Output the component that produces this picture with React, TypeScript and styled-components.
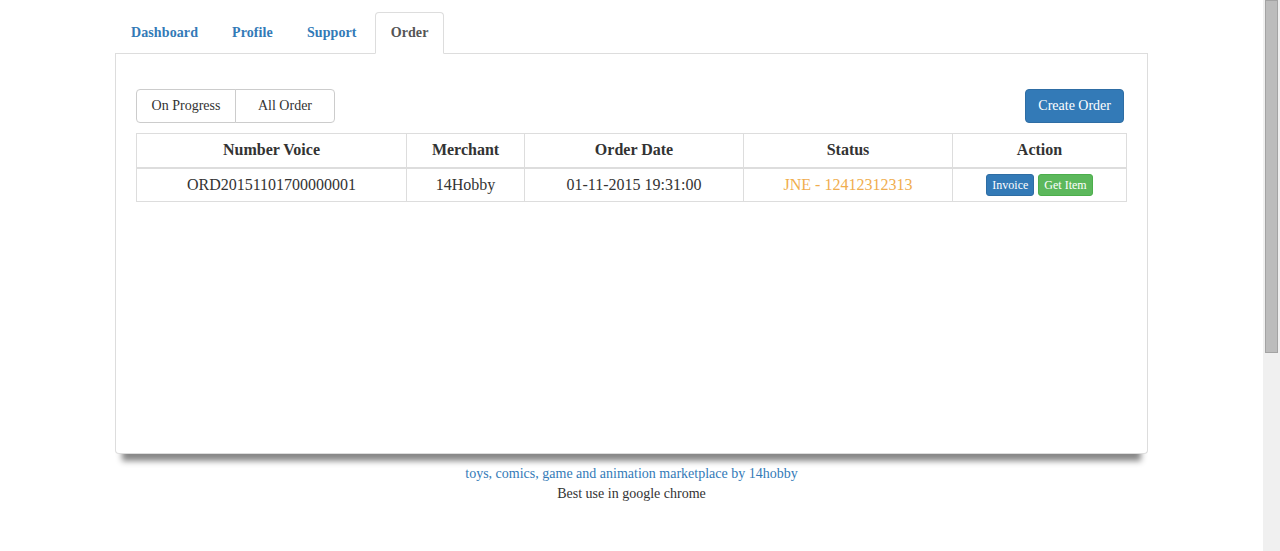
import React from "react";
import styled, { createGlobalStyle } from "styled-components";

const GlobalStyle = createGlobalStyle`
  html, body {
    margin: 0;
    padding: 0;
    background: #ffffff;
    font-family: "Liberation Serif", "Times New Roman", serif;
    font-size: 14px;
    line-height: 1.42857143;
    color: #333333;
  }
  * { box-sizing: border-box; }
`;

const Page = styled.div`
  margin-right: 17px;
  padding-top: 12px;
`;

const Container = styled.div`
  width: 1033px;
  margin: 0 auto;
`;

const Tabs = styled.ul`
  display: flex;
  list-style: none;
  margin: 0;
  padding: 0;
  border-bottom: 1px solid #dddddd;
`;

const TabItem = styled.li`
  margin-right: 2px;
  margin-bottom: -1px;
`;

const TabLink = styled.a<{ $active?: boolean }>`
  display: block;
  padding: 10px 15px;
  font-weight: bold;
  font-size: 14px;
  line-height: 20px;
  letter-spacing: 0.1px;
  text-decoration: none;
  cursor: pointer;
  border: 1px solid ${(p) => (p.$active ? "#dddddd" : "transparent")};
  border-bottom-color: transparent;
  border-radius: 4px 4px 0 0;
  background: ${(p) => (p.$active ? "#ffffff" : "transparent")};
  color: ${(p) => (p.$active ? "#555555" : "#337ab7")};
`;

const Panel = styled.div`
  height: 400px;
  border: 1px solid #dddddd;
  border-top: none;
  border-radius: 0 0 4px 4px;
  padding: 35px 20px 20px;
  background: #ffffff;
  box-shadow: 0 14px 6px -7px #888888;
`;

const Toolbar = styled.div`
  display: flex;
  justify-content: space-between;
  align-items: flex-start;
  margin-bottom: 10px;
`;

const BtnGroup = styled.div`
  display: flex;
`;

const GroupButton = styled.button<{ $first?: boolean }>`
  width: 100px;
  height: 34px;
  padding: 6px 12px;
  font-family: inherit;
  font-size: 14px;
  line-height: 20px;
  color: #333333;
  background: #ffffff;
  border: 1px solid #cccccc;
  margin-left: ${(p) => (p.$first ? "0" : "-1px")};
  border-radius: ${(p) => (p.$first ? "4px 0 0 4px" : "0 4px 4px 0")};
  cursor: pointer;
`;

const PrimaryButton = styled.button`
  height: 34px;
  padding: 6px 12px;
  margin-right: 3px;
  font-family: inherit;
  font-size: 14px;
  line-height: 20px;
  color: #ffffff;
  background: #337ab7;
  border: 1px solid #2e6da4;
  border-radius: 4px;
  cursor: pointer;
`;

const Table = styled.table`
  width: 100%;
  border-collapse: collapse;
  border-spacing: 0;
  font-size: 16px;
  line-height: 22px;
  table-layout: fixed;
`;

const Th = styled.th<{ $w?: number }>`
  width: ${(p) => (p.$w ? `${p.$w}px` : "auto")};
  padding: 5px;
  height: 34px;
  text-align: center;
  font-weight: bold;
  border: 1px solid #dddddd;
  border-bottom: 2px solid #dddddd;
  color: #333333;
`;

const Td = styled.td<{ $status?: boolean }>`
  padding: 5px;
  height: 34px;
  text-align: center;
  border: 1px solid #dddddd;
  color: ${(p) => (p.$status ? "#f0ad4e" : "#333333")};
`;

const Actions = styled.div`
  display: flex;
  justify-content: center;
  gap: 4px;
`;

const SmallButton = styled.button<{ $variant: "primary" | "success" }>`
  padding: 1px 5px;
  font-family: inherit;
  font-size: 12px;
  line-height: 18px;
  color: #ffffff;
  border-radius: 3px;
  cursor: pointer;
  background: ${(p) => (p.$variant === "primary" ? "#337ab7" : "#5cb85c")};
  border: 1px solid ${(p) => (p.$variant === "primary" ? "#2e6da4" : "#4cae4c")};
`;

const Footer = styled.footer`
  margin-top: 10px;
  text-align: center;
  font-size: 14px;
  line-height: 20px;
`;

const FooterLink = styled.a`
  display: block;
  color: #337ab7;
  text-decoration: none;
`;

const FooterNote = styled.div`
  color: #333333;
`;

const Scrollbar = styled.div`
  position: fixed;
  top: 0;
  right: 0;
  width: 17px;
  height: 100vh;
  background: #f0f0f0;
`;

const ScrollThumb = styled.div`
  margin-left: 2px;
  width: 13px;
  height: 353px;
  background: #bcbcbc;
  border: 1px solid #a3a3a3;
`;

const tabs = ["Dashboard", "Profile", "Support", "Order"];

export default function App() {
  return (
    <>
      <GlobalStyle />
      <Page>
        <Container>
          <Tabs>
            {tabs.map((t) => (
              <TabItem key={t}>
                <TabLink $active={t === "Order"}>{t}</TabLink>
              </TabItem>
            ))}
          </Tabs>
          <Panel>
            <Toolbar>
              <BtnGroup>
                <GroupButton $first>On Progress</GroupButton>
                <GroupButton>All Order</GroupButton>
              </BtnGroup>
              <PrimaryButton>Create Order</PrimaryButton>
            </Toolbar>
            <Table>
              <thead>
                <tr>
                  <Th $w={270}>Number Voice</Th>
                  <Th $w={118}>Merchant</Th>
                  <Th $w={219}>Order Date</Th>
                  <Th $w={209}>Status</Th>
                  <Th>Action</Th>
                </tr>
              </thead>
              <tbody>
                <tr>
                  <Td>ORD20151101700000001</Td>
                  <Td>14Hobby</Td>
                  <Td>01-11-2015 19:31:00</Td>
                  <Td $status>JNE - 12412312313</Td>
                  <Td>
                    <Actions>
                      <SmallButton $variant="primary">Invoice</SmallButton>
                      <SmallButton $variant="success">Get Item</SmallButton>
                    </Actions>
                  </Td>
                </tr>
              </tbody>
            </Table>
          </Panel>
          <Footer>
            <FooterLink>toys, comics, game and animation marketplace by 14hobby</FooterLink>
            <FooterNote>Best use in google chrome</FooterNote>
          </Footer>
        </Container>
      </Page>
      <Scrollbar>
        <ScrollThumb />
      </Scrollbar>
    </>
  );
}
